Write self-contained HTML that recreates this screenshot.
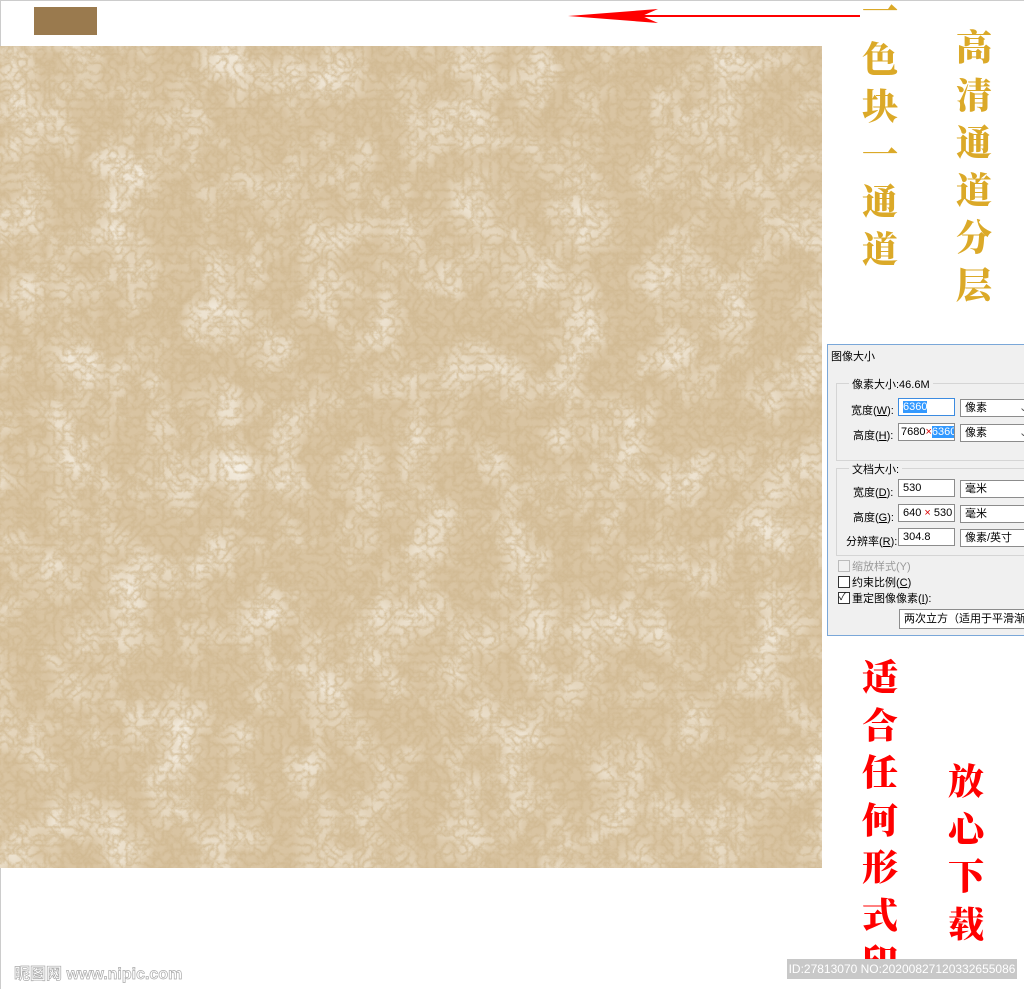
<!DOCTYPE html>
<html><head><meta charset="utf-8"><style>
body{margin:0;width:1024px;height:989px;position:relative;background:#fff;overflow:hidden;font-family:"Liberation Sans","Noto Sans CJK SC",sans-serif}
.a{position:absolute}
.v{position:absolute;width:44px;text-align:center;font-family:"Noto Serif CJK SC","Noto Sans CJK SC",serif;font-weight:900;font-size:36px;line-height:47.5px}
.d{font-size:11px;color:#000;white-space:nowrap}
.box{position:absolute;background:#fff;border:1px solid #8c8c8c;height:18px;font-size:11px;line-height:16px;padding-left:4px;box-sizing:border-box;white-space:nowrap;overflow:hidden}
</style></head><body>
<div class="a" style="left:0;top:0;width:1024px;height:1px;background:#ccc"></div>
<div class="a" style="left:0;top:0;width:1px;height:989px;background:#ccc"></div>
<div class="a" style="left:34px;top:7px;width:63px;height:28px;background:#9a7a4e"></div>
<svg class="a" style="left:0;top:0" width="1024" height="989">
<defs>
<filter id="t" x="0" y="0" width="100%" height="100%">
<feTurbulence type="turbulence" baseFrequency="0.11" numOctaves="3" seed="5" result="n"/>
<feColorMatrix in="n" type="matrix" values="0 0 0 0 0.62  0 0 0 0 0.47  0 0 0 0 0.27  -1.8 0 0 0 0.85"/>
</filter>
<filter id="t2" x="0" y="0" width="100%" height="100%">
<feTurbulence type="fractalNoise" baseFrequency="0.02" numOctaves="3" seed="9" result="n"/>
<feColorMatrix in="n" type="matrix" values="0 0 0 0 0.96  0 0 0 0 0.93  0 0 0 0 0.87  0 0 0 -1.6 0.95"/>
</filter>
</defs>
<rect x="0" y="46" width="822" height="822" fill="#d9c4a2"/>
<rect x="0" y="46" width="822" height="822" filter="url(#t2)"/>
<rect x="0" y="46" width="822" height="822" filter="url(#t)"/>
<line x1="600" y1="16" x2="860" y2="16" stroke="#f00" stroke-width="2"/>
<path d="M568 16 L658 9 L642 16 L658 23 Z" fill="#f00"/>
</svg>
<div class="v" style="left:858px;top:-14px;color:#dba928">一<br>色<br>块<br>一<br>通<br>道</div>
<div class="v" style="left:952px;top:22px;color:#dba928">高<br>清<br>通<br>道<br>分<br>层</div>
<div class="v" style="left:858px;top:652px;color:#f00">适<br>合<br>任<br>何<br>形<br>式<br>印</div>
<div class="v" style="left:944px;top:756px;color:#f00">放<br>心<br>下<br>载</div>
<div class="a" style="left:827px;top:344px;width:200px;height:292px;background:#f0f0f0;border:1px solid #7aa7d8;box-sizing:border-box;overflow:hidden">
<div class="a d" style="left:3px;top:3px">图像大小</div>
<div class="a" style="left:8px;top:38px;width:200px;height:76px;border:1px solid #d5d5d5"></div>
<div class="a d" style="left:21px;top:31px;background:#f0f0f0;padding:0 3px">像素大小:46.6M</div>
<div class="a d" style="left:23px;top:57px">宽度(<u>W</u>):</div>
<div class="box" style="left:70px;top:53px;width:57px;border-color:#3c8be0"><span style="background:#3399ff;color:#fff">6360</span></div>
<div class="box" style="left:132px;top:54px;width:72px">像素<span style="position:absolute;left:58px;color:#555">⌄</span></div>
<div class="a d" style="left:25px;top:82px">高度(<u>H</u>):</div>
<div class="box" style="left:70px;top:78px;width:57px;padding-left:2px">7680<span style="color:#d00">×</span><span style="background:#3399ff;color:#fff">6360</span></div>
<div class="box" style="left:132px;top:79px;width:72px">像素<span style="position:absolute;left:58px;color:#555">⌄</span></div>
<div class="a" style="left:8px;top:123px;width:200px;height:86px;border:1px solid #d5d5d5"></div>
<div class="a d" style="left:21px;top:116px;background:#f0f0f0;padding:0 3px">文档大小:</div>
<div class="a d" style="left:25px;top:139px">宽度(<u>D</u>):</div>
<div class="box" style="left:70px;top:134px;width:57px">530</div>
<div class="box" style="left:132px;top:135px;width:72px">毫米</div>
<div class="a d" style="left:25px;top:164px">高度(<u>G</u>):</div>
<div class="box" style="left:70px;top:159px;width:57px">640 <span style="color:#d00">×</span> 530</div>
<div class="box" style="left:132px;top:160px;width:72px">毫米</div>
<div class="a d" style="left:18px;top:188px">分辨率(<u>R</u>):</div>
<div class="box" style="left:70px;top:183px;width:57px">304.8</div>
<div class="box" style="left:132px;top:184px;width:72px">像素/英寸</div>
<div class="a" style="left:10px;top:215px;width:10px;height:10px;border:1px solid #bbb"></div>
<div class="a d" style="left:24px;top:213px;color:#999">缩放样式(Y)</div>
<div class="a" style="left:10px;top:231px;width:10px;height:10px;border:1px solid #333;background:#fff"></div>
<div class="a d" style="left:24px;top:229px">约束比例(<u>C</u>)</div>
<div class="a" style="left:10px;top:247px;width:10px;height:10px;border:1px solid #333;background:#fff;font-size:10px;line-height:10px">✓</div>
<div class="a d" style="left:24px;top:245px">重定图像像素(<u>I</u>):</div>
<div class="box" style="left:71px;top:264px;width:130px;height:20px;line-height:18px">两次立方（适用于平滑渐变</div>
</div>
<div class="a" style="left:14px;top:960px;font-size:16px;font-weight:bold;color:#fff;-webkit-text-stroke:0.7px #aaa">昵图网 www.nipic.com</div>
<div class="a" style="left:787px;top:959px;width:230px;height:20px;background:#c8c8c8;color:#fff;font-size:12px;line-height:20px;text-align:center">ID:27813070 NO:20200827120332655086</div>
</body></html>
